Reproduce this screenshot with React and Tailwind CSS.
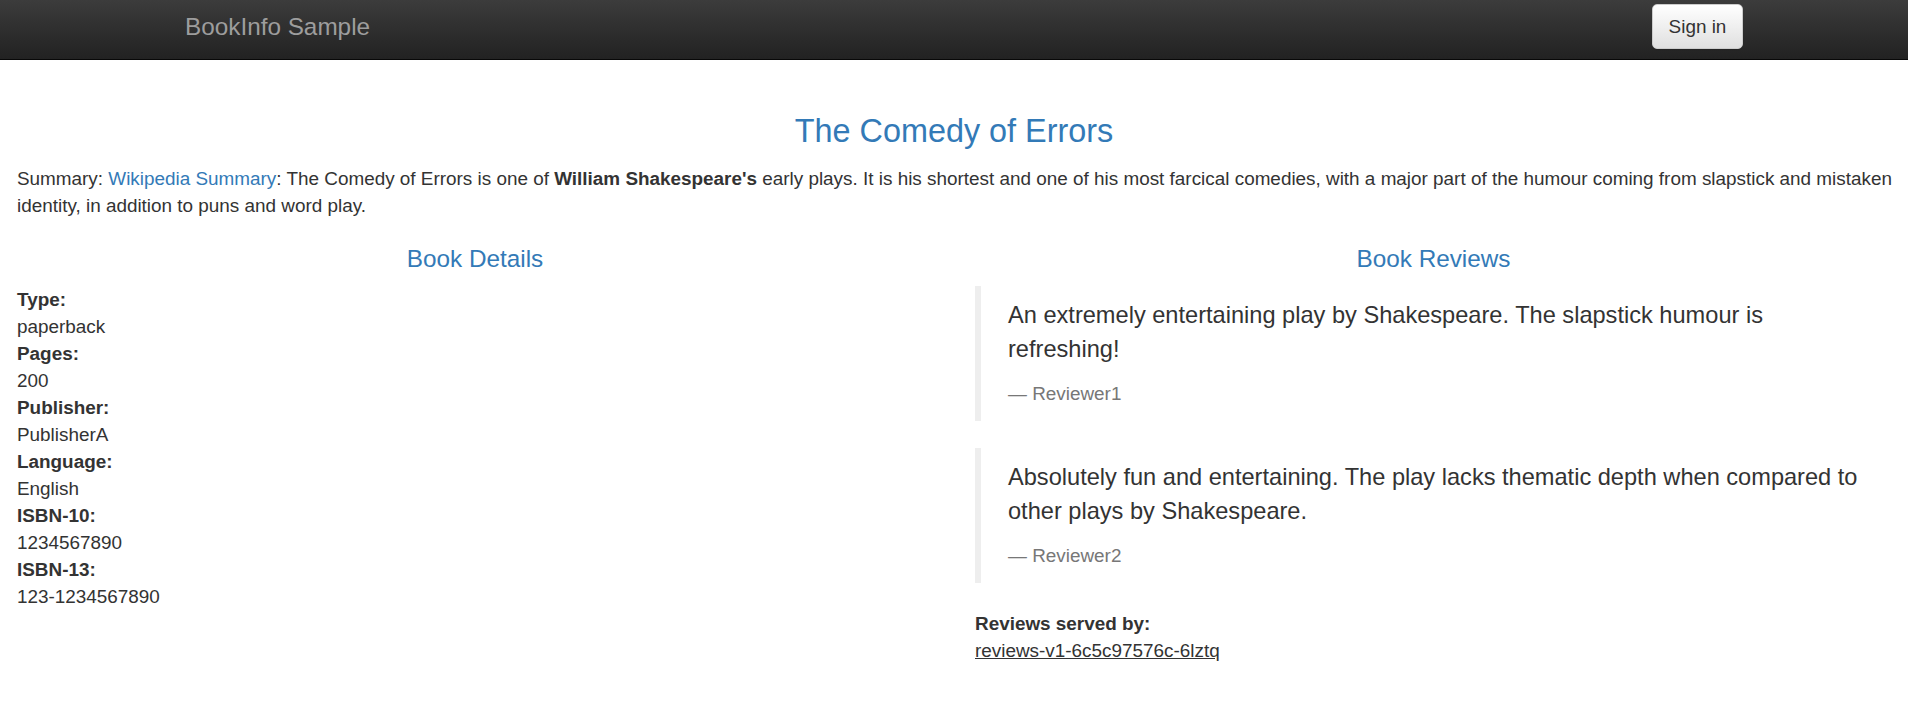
import React from "react";

const details = [
  ["Type:", "paperback"],
  ["Pages:", "200"],
  ["Publisher:", "PublisherA"],
  ["Language:", "English"],
  ["ISBN-10:", "1234567890"],
  ["ISBN-13:", "123-1234567890"],
];

const reviews = [
  {
    text: "An extremely entertaining play by Shakespeare. The slapstick humour is refreshing!",
    author: "Reviewer1",
  },
  {
    text: "Absolutely fun and entertaining. The play lacks thematic depth when compared to other plays by Shakespeare.",
    author: "Reviewer2",
  },
];

const Review = ({ text, author }) => (
  <blockquote className="mb-[27px] border-l-[6px] border-[#eeeeee] py-[13.5px] pl-[27px] pr-[20px]">
    <p className="mb-[13.5px] text-[23.6px] leading-[33.75px]">{text}</p>
    <small className="block text-[18.9px] leading-[27px] text-[#777777]">— {author}</small>
  </blockquote>
);

export default function App() {
  return (
    <div className="min-h-screen bg-white font-['Liberation_Sans',Arial,sans-serif] text-[18.9px] leading-[27px] text-[#333333]">
      <nav className="flex h-[60px] items-start justify-between border-b border-[#080808] bg-linear-to-b from-[#3c3c3c] to-[#222222] pl-[185px] pr-[165px]">
        <a href="#" className="mt-[13.5px] text-[24.3px] leading-[26.7px] text-[#9d9d9d]">
          BookInfo Sample
        </a>
        <button
          type="button"
          className="mt-[4px] h-[45px] w-[91px] rounded-[5px] border border-[#cccccc] bg-linear-to-b from-white to-[#e0e0e0] text-[18.9px] leading-[27px] text-[#333333] shadow-[inset_0_1px_0_rgba(255,255,255,0.15),0_1px_1px_rgba(0,0,0,0.075)]"
        >
          Sign in
        </button>
      </nav>

      <main>
        <h3 className="mt-[54px] text-center text-[32.4px] font-medium leading-[35.6px] text-[#337ab7]">
          The Comedy of Errors
        </h3>
        <p className="mt-[15px] pl-[17px] pr-[8px]">
          Summary: <a href="#" className="text-[#337ab7]">Wikipedia Summary</a>: The Comedy of Errors is one of{" "}
          <b>William Shakespeare's</b> early plays. It is his shortest and one of his most farcical comedies, with a
          major part of the humour coming from slapstick and mistaken identity, in addition to puns and word play.
        </p>

        <div className="mt-[27px] grid grid-cols-2">
          <div className="pl-[17px] pr-[21px]">
            <h4 className="mb-[13.5px] text-center text-[24.3px] font-medium leading-[26.7px] text-[#337ab7]">
              Book Details
            </h4>
            <dl>
              {details.map(([label, value]) => (
                <React.Fragment key={label}>
                  <dt className="font-bold">{label}</dt>
                  <dd>{value}</dd>
                </React.Fragment>
              ))}
            </dl>
          </div>

          <div className="pl-[21px] pr-[16px]">
            <h4 className="mb-[13.5px] text-center text-[24.3px] font-medium leading-[26.7px] text-[#337ab7]">
              Book Reviews
            </h4>
            {reviews.map((r) => (
              <Review key={r.author} {...r} />
            ))}
            <dl>
              <dt className="font-bold">Reviews served by:</dt>
              <dd>
                <u>reviews-v1-6c5c97576c-6lztq</u>
              </dd>
            </dl>
          </div>
        </div>
      </main>
    </div>
  );
}
